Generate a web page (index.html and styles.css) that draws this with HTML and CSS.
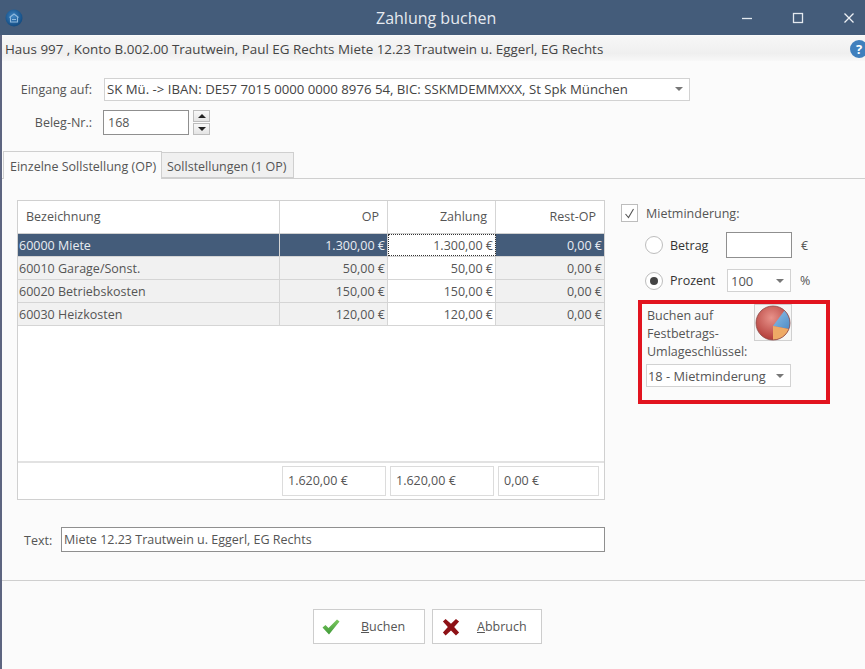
FILE: index.html
```html
<!DOCTYPE html>
<html>
<head>
    <meta charset="UTF-8">
    <title>Zahlung buchen</title>
    <link rel="stylesheet" href="styles.css">
</head>
<body>
    <div class="window">
        <div class="titlebar">
            <svg class="app-icon" width="18" height="18" viewBox="0 0 18 18">
                <defs>
                    <radialGradient id="appBall" cx="45%" cy="40%" r="60%">
                        <stop offset="0" stop-color="#3f86c4"></stop>
                        <stop offset="1" stop-color="#124a80"></stop>
                    </radialGradient>
                </defs>
                <circle cx="9" cy="9" r="8.500" fill="url(#appBall)"></circle>
                <path d="M4.500 8.500 9 5l4.500 3.500M5.500 8v5h7V8M7 10.500h4" fill="none" stroke="#8fb8dc" stroke-width="1.100"></path>
            </svg>
            <span class="window-title">Zahlung buchen</span>
            <div class="window-buttons">
                <svg width="12" height="12" viewBox="0 0 12 12"><path d="M1 6.500h10" stroke="#e4e9ef" stroke-width="1.300"></path></svg>
                <svg width="12" height="12" viewBox="0 0 12 12"><rect x="1.500" y="1.500" width="9" height="9" fill="none" stroke="#e4e9ef" stroke-width="1.300"></rect></svg>
                <svg width="12" height="12" viewBox="0 0 12 12"><path d="M1.500 1.500l9 9M10.500 1.500l-9 9" stroke="#eef1f5" stroke-width="1.300"></path></svg>
            </div>
        </div>

        <div class="infobar">
            <span>Haus 997 , Konto B.002.00 Trautwein, Paul EG Rechts Miete 12.23 Trautwein u. Eggerl, EG Rechts</span>
            <div class="help-badge">?</div>
        </div>

        <div class="form-top">
            <div class="form-row">
                <label class="row-label">Eingang auf:</label>
                <div class="combo combo-account">
                    <span>SK Mü. -&gt; IBAN: DE57 7015 0000 0000 8976 54, BIC: SSKMDEMMXXX, St Spk München</span>
                    <i class="caret"></i>
                </div>
            </div>
            <div class="form-row form-row-beleg">
                <label class="row-label">Beleg-Nr.:</label>
                <div class="input-dark beleg-input">168</div>
                <div class="spin">
                    <div class="spin-btn"><i class="arrow-up"></i></div>
                    <div class="spin-btn"><i class="arrow-down"></i></div>
                </div>
            </div>
        </div>

        <div class="tabs">
            <div class="tab tab-active">Einzelne Sollstellung (OP)</div>
            <div class="tab tab-second">Sollstellungen (1 OP)</div>
        </div>

        <div class="content">
            <div class="grid-box">
                <div class="grid-row grid-head">
                    <div class="cell cell-name">Bezeichnung</div>
                    <div class="cell">OP</div>
                    <div class="cell">Zahlung</div>
                    <div class="cell">Rest-OP</div>
                </div>
                <div class="grid-row data-row selected">
                    <div class="cell cell-name">60000 Miete</div>
                    <div class="cell">1.300,00 €</div>
                    <div class="cell cell-pay">1.300,00 €</div>
                    <div class="cell">0,00 €</div>
                </div>
                <div class="grid-row data-row">
                    <div class="cell cell-name">60010 Garage/Sonst.</div>
                    <div class="cell">50,00 €</div>
                    <div class="cell cell-pay">50,00 €</div>
                    <div class="cell">0,00 €</div>
                </div>
                <div class="grid-row data-row">
                    <div class="cell cell-name">60020 Betriebskosten</div>
                    <div class="cell">150,00 €</div>
                    <div class="cell cell-pay">150,00 €</div>
                    <div class="cell">0,00 €</div>
                </div>
                <div class="grid-row data-row">
                    <div class="cell cell-name">60030 Heizkosten</div>
                    <div class="cell">120,00 €</div>
                    <div class="cell cell-pay">120,00 €</div>
                    <div class="cell">0,00 €</div>
                </div>
                <div class="grid-spacer"></div>
                <div class="grid-sum">
                    <div class="sum-field">1.620,00 €</div>
                    <div class="sum-field">1.620,00 €</div>
                    <div class="sum-field sum-last">0,00 €</div>
                </div>
            </div>

            <div class="side">
                <div class="check-row">
                    <div class="checkbox">
                        <svg width="13" height="13" viewBox="0 0 13 13"><path d="M2.500 7l3 3.500 5-8.500" fill="none" stroke="#555" stroke-width="1.100"></path></svg>
                    </div>
                    <span>Mietminderung:</span>
                </div>
                <div class="radio-row radio-betrag">
                    <div class="radio"></div>
                    <span class="radio-label">Betrag</span>
                    <div class="input-dark betrag-input"></div>
                    <span class="unit">€</span>
                </div>
                <div class="radio-row radio-prozent">
                    <div class="radio radio-on"></div>
                    <span class="radio-label">Prozent</span>
                    <div class="combo combo-percent"><span>100</span><i class="caret"></i></div>
                    <span class="unit">%</span>
                </div>
                <div class="highlight">
                    <div class="highlight-top">
                        <div class="highlight-text">Buchen auf<br>Festbetrags-<br>Umlageschlüssel:</div>
                        <div class="pie-button">
                            <svg width="36" height="36" viewBox="0 0 36 36">
                                <defs>
                                    <radialGradient id="pieRed" cx="45%" cy="35%" r="65%">
                                        <stop offset="0" stop-color="#e8928a"></stop>
                                        <stop offset="1" stop-color="#b23c38"></stop>
                                    </radialGradient>
                                    <linearGradient id="pieBlue" x1="0" y1="0" x2="1" y2="1">
                                        <stop offset="0" stop-color="#8fc0e8"></stop>
                                        <stop offset="1" stop-color="#4f8cc6"></stop>
                                    </linearGradient>
                                </defs>
                                <circle cx="18" cy="18" r="17" fill="url(#pieRed)"></circle>
                                <path d="M18 21 L29.500 5.500 A17 17 0 0 1 34 24 Z" fill="url(#pieBlue)"></path>
                                <path d="M18 21 L34 24 A17 17 0 0 1 18 35 Z" fill="#eeaa66"></path>
                                <circle cx="18" cy="18" r="17" fill="none" stroke="#8c4a48" stroke-width="0.800"></circle>
                            </svg>
                        </div>
                    </div>
                    <div class="combo combo-key"><span>18 - Mietminderung</span><i class="caret"></i></div>
                </div>
            </div>
        </div>

        <div class="text-row">
            <label>Text:</label>
            <div class="input-dark text-input">Miete 12.23 Trautwein u. Eggerl, EG Rechts</div>
        </div>

        <div class="actions">
            <div class="action-btn btn-book">
                <svg width="18" height="16" viewBox="0 0 18 16">
                    <defs>
                        <linearGradient id="checkGreen" x1="0" y1="0" x2="0" y2="1">
                            <stop offset="0" stop-color="#7cc85f"></stop>
                            <stop offset="1" stop-color="#3f9a38"></stop>
                        </linearGradient>
                    </defs>
                    <path d="M0.500 8.500l3-2.500 3 3L15 0.500l2.500 2L7 15.500z" fill="url(#checkGreen)"></path>
                </svg>
                <span><u>B</u>uchen</span>
            </div>
            <div class="action-btn btn-cancel">
                <svg width="18" height="18" viewBox="0 0 20 20"><path d="M1 4l3-3 6 5.500L15.500 1 19 4l-5.500 6 5.500 6-3.500 3.500L10 14l-6 5.500L1 16l5.500-6z" fill="#8e1116"></path></svg>
                <span><u>A</u>bbruch</span>
            </div>
        </div>
    </div>
</body>
</html>
```

FILE: styles.css
```css
* {
    margin: 0;
    padding: 0;
    box-sizing: border-box;
    font-family: "Open Sans", "Noto Sans", sans-serif;
}

body {
    width: 865px;
    height: 669px;
    overflow: hidden;
    background: #fbfbfb;
    font-size: 12.500px;
    color: #555;
}

.window {
    height: 669px;
    border-left: 2px solid #5d6580;
    display: flex;
    flex-direction: column;
}

.titlebar {
    height: 35px;
    margin-left: -2px;
    padding: 0 10px 0 5px;
    background: #445c7a;
    display: flex;
    align-items: center;
    flex-shrink: 0;
}

.window-title {
    font-size: 16px;
    color: #e6eaf0;
    margin-left: 353px;
    margin-right: auto;
}

.window-buttons {
    display: flex;
    gap: 39px;
}

.infobar {
    height: 25px;
    margin-top: 1px;
    padding-left: 3px;
    background: linear-gradient(#f7f7f7, #efefef 70%, #f8f8f8);
    display: flex;
    align-items: center;
    justify-content: space-between;
    font-size: 13.400px;
    color: #444;
    flex-shrink: 0;
}

.help-badge {
    width: 18px;
    height: 18px;
    margin-right: -3px;
    border-radius: 50%;
    background: #3f7fbd;
    color: white;
    font-weight: 700;
    font-size: 13px;
    line-height: 18px;
    text-align: center;
}

.form-top {
    padding-top: 17px;
}

.form-row {
    display: flex;
    align-items: center;
}

.form-row-beleg {
    margin-top: 9px;
}

.row-label {
    width: 90px;
    margin-right: 12px;
    text-align: right;
}

.combo {
    height: 23px;
    padding: 0 6px 0 2px;
    background: white;
    border: 1px solid #d2d2d2;
    display: flex;
    align-items: center;
    justify-content: space-between;
    font-size: 13px;
}

.combo-account {
    width: 586px;
    color: #444;
    font-size: 13.200px;
    line-height: 20px;
    padding-bottom: 1px;
}

.caret {
    width: 0;
    height: 0;
    border-left: 4px solid transparent;
    border-right: 4px solid transparent;
    border-top: 4px solid #777;
}

.input-dark {
    background: white;
    border: 1px solid #8f8f8f;
}

.beleg-input {
    width: 86px;
    height: 25px;
    margin-left: -1px;
    padding: 0 4px;
    line-height: 23px;
}

.spin {
    margin-left: 4px;
    display: flex;
    flex-direction: column;
    gap: 1px;
}

.spin-btn {
    width: 17px;
    height: 12px;
    background: linear-gradient(#f8f8f8, #e4e4e4);
    border: 1px solid #bdbdbd;
    display: flex;
    align-items: center;
    justify-content: center;
}

.arrow-up {
    border-left: 4px solid transparent;
    border-right: 4px solid transparent;
    border-bottom: 4px solid #222;
}

.arrow-down {
    border-left: 4px solid transparent;
    border-right: 4px solid transparent;
    border-top: 4px solid #222;
}

.tabs {
    margin-top: 16px;
    height: 28px;
    padding-left: 1px;
    border-bottom: 1px solid #cfcfcf;
    display: flex;
    align-items: flex-end;
}

.tab {
    height: 26px;
    background: #f0f0f0;
    border: 1px solid #cfcfcf;
    border-left: none;
    line-height: 27px;
    white-space: nowrap;
}

.tab-active {
    width: 159px;
    height: 28px;
    margin-bottom: -1px;
    padding-left: 6px;
    background: #fbfbfb;
    border-left: 1px solid #cfcfcf;
    border-bottom: none;
    line-height: 30px;
}

.tab-second {
    width: 132px;
    padding-left: 5px;
}

.content {
    display: flex;
    padding: 21px 0 0 15px;
}

.grid-box {
    width: 588px;
    height: 300px;
    background: white;
    border: 1px solid #d0d0d0;
    display: flex;
    flex-direction: column;
}

.grid-row {
    display: grid;
    grid-template-columns: 262px 108px 108px 1fr;
}

.grid-head {
    height: 33px;
    line-height: 31px;
    border-bottom: 1px solid #d0d0d0;
}

.cell {
    padding: 0 15px 0 4px;
    text-align: right;
    border-right: 1px solid #d5d5d5;
}

.cell:last-child {
    border-right: none;
}

.grid-head .cell {
    padding-right: 8px;
}

.grid-head .cell-name {
    padding-left: 8px;
}

.cell-name {
    text-align: left;
    padding-left: 1px;
}

.data-row {
    height: 23px;
    background: #f1f1f1;
    border-bottom: 1px solid #d5d5d5;
}

.data-row .cell {
    height: 22px;
    padding-top: 1px;
    padding-right: 2px;
    line-height: 21px;
}

.data-row .cell-name {
    padding-left: 1px;
}

.cell-pay {
    background: white;
}

.selected {
    background: #445c7a;
    color: #e9edf2;
}

.selected .cell-pay {
    color: #555;
    outline: 1px dotted #333;
    outline-offset: -1px;
}

.grid-spacer {
    flex: 1;
}

.grid-sum {
    height: 38px;
    padding: 3px 5px 0 264px;
    border-top: 2px solid #e2e2e2;
    display: flex;
    gap: 4px;
}

.sum-field {
    width: 104px;
    height: 30px;
    padding-left: 5px;
    border: 1px solid #dcdcdc;
    line-height: 28px;
}

.sum-last {
    width: 101px;
}

.side {
    margin-left: 16px;
    width: 210px;
}

.check-row {
    margin-top: 4px;
    display: flex;
    align-items: center;
    gap: 8px;
}

.checkbox {
    width: 17px;
    height: 18px;
    background: white;
    border: 1px solid #bdbdbd;
    display: flex;
    align-items: center;
    justify-content: center;
}

.radio-row {
    display: flex;
    align-items: center;
    margin-left: 24px;
}

.radio-betrag {
    margin-top: 10px;
}

.radio-prozent {
    margin-top: 11px;
}

.radio {
    width: 18px;
    height: 18px;
    border: 1px solid #bdbdbd;
    border-radius: 50%;
    background: white;
    display: flex;
    align-items: center;
    justify-content: center;
}

.radio-on::after {
    content: "";
    width: 8px;
    height: 8px;
    border-radius: 50%;
    background: #444;
}

.radio-label {
    width: 56px;
    margin-left: 7px;
    color: #333;
}

.betrag-input {
    width: 66px;
    height: 26px;
}

.unit {
    margin-left: 9px;
}

.combo-percent {
    width: 64px;
    margin-left: 1px;
    padding-left: 3px;
}

.highlight {
    width: 192px;
    height: 104px;
    margin-top: 8px;
    margin-left: 17px;
    padding: 0 4px 0 5px;
    border: 4px solid #e2141f;
}

.highlight-top {
    display: flex;
    line-height: 18px;
}

.highlight-text {
    width: 107px;
    padding-top: 3px;
}

.pie-button {
    width: 38px;
    height: 37px;
    background: #f6f6f6;
    border: 1px solid #d0d0d0;
    display: flex;
    align-items: center;
    justify-content: center;
}

.combo-key {
    width: 145px;
    margin-top: 3px;
    margin-left: -1px;
    padding-left: 1px;
    font-size: 12.800px;
}

.text-row {
    margin-top: 27px;
    padding-left: 22px;
    display: flex;
    align-items: center;
}

.text-row label {
    width: 37px;
    padding-top: 1px;
}

.text-input {
    width: 544px;
    height: 25px;
    padding-left: 2px;
    line-height: 23px;
}

.actions {
    margin-top: 28px;
    padding-top: 28px;
    padding-left: 311px;
    border-top: 1px solid #cfcfcf;
    display: flex;
    gap: 7px;
}

.action-btn {
    height: 35px;
    background: white;
    border: 1px solid #cdcdcd;
    display: flex;
    align-items: center;
}

.btn-book {
    width: 112px;
    padding-left: 8px;
    gap: 21px;
}

.btn-cancel {
    width: 110px;
    padding-left: 9px;
    gap: 17px;
}
```
